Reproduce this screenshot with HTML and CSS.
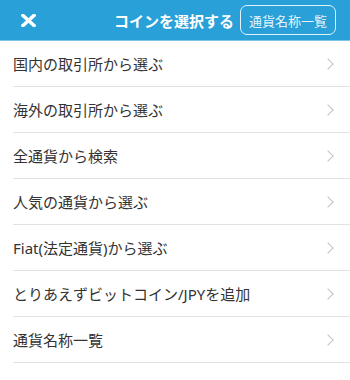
FILE: index.html
```html
<!DOCTYPE html>
<html lang="ja">
<head>
  <meta charset="UTF-8" />
  <meta name="viewport" content="width=device-width, initial-scale=1.0"/>
  <title>コインを選択する</title>
  <link rel="stylesheet" href="styles.css">
</head>
<body>

  <div class="header">
    <button class="close-btn" aria-label="閉じる">
      <svg width="15" height="13" viewBox="0 0 15 13">
        <path d="M2 1.5 L13 11.5 M13 1.5 L2 11.5" stroke="#fff" stroke-width="3.6" stroke-linecap="square" fill="none"/>
      </svg>
    </button>
    <h1>コインを選択する</h1>
    <button class="name-btn">通貨名称一覧</button>
  </div>

  <ul class="menu">
    <li><span>国内の取引所から選ぶ</span><i class="chev"></i></li>
    <li><span>海外の取引所から選ぶ</span><i class="chev"></i></li>
    <li><span>全通貨から検索</span><i class="chev"></i></li>
    <li><span>人気の通貨から選ぶ</span><i class="chev"></i></li>
    <li><span>Fiat(法定通貨)から選ぶ</span><i class="chev"></i></li>
    <li><span>とりあえずビットコイン/JPYを追加</span><i class="chev"></i></li>
    <li><span>通貨名称一覧</span><i class="chev"></i></li>
  </ul>

</body>
</html>
```

FILE: styles.css
```css
* {
  box-sizing: border-box;
}

body {
  margin: 0;
  padding: 0;
  background: #fff;
  font-family: 'Noto Sans', 'Noto Sans CJK JP', sans-serif;
  color: #333;
}

.header {
  display: flex;
  align-items: center;
  height: 41px;
  background: #29a0d8;
  border-bottom: 1px solid #7cc4e8;
  padding: 0 14px 0 21px;
}

.close-btn {
  background: none;
  border: none;
  padding: 0;
  display: flex;
  cursor: pointer;
}

.header h1 {
  flex: 1;
  margin: 0;
  text-align: right;
  padding-right: 6px;
  color: #fff;
  font-size: 15px;
  font-weight: bold;
}

.name-btn {
  height: 30px;
  padding: 0 8px;
  background: none;
  border: 1px solid rgba(255, 255, 255, 0.85);
  border-radius: 7px;
  color: rgba(255, 255, 255, 0.9);
  font-family: inherit;
  font-size: 13px;
  cursor: pointer;
}

.menu {
  list-style: none;
  margin: 0;
  padding: 0 0 0 13px;
}

.menu li {
  display: flex;
  align-items: center;
  justify-content: space-between;
  height: 46px;
  border-bottom: 1px solid #e2e2e2;
  padding-right: 16px;
  font-size: 15px;
  color: #333;
}

.chev {
  width: 8px;
  height: 8px;
  border-top: 1.3px solid #c4c4c4;
  border-right: 1.3px solid #c4c4c4;
  transform: rotate(45deg);
  margin-right: 2px;
}
```
